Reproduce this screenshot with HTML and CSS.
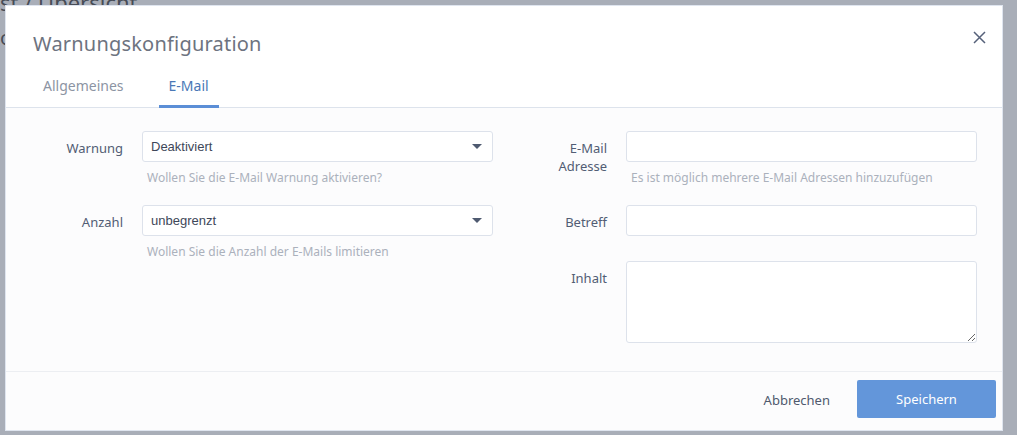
FILE: index.html
```html
<!DOCTYPE html>
<html lang="de">
<head>
    <meta charset="UTF-8">
    <meta name="viewport" content="width=device-width, initial-scale=1.0">
    <title>Warnungskonfiguration</title>
    <link rel="stylesheet" href="styles.css">
</head>
<body>
    <div class="page">
        <div class="crumb">st / Übersicht</div>
        <div class="page-row">o</div>
    </div>
    <div class="overlay"></div>

    <div class="modal">
        <div class="modal-header">
            <h2 class="modal-title">Warnungskonfiguration</h2>
            <button class="close" type="button" aria-label="Schließen">
                <svg width="13" height="13" viewBox="0 0 13 13">
                    <path d="M1 1 L12 12 M12 1 L1 12" stroke="#56617a" stroke-width="1.5" fill="none"/>
                </svg>
            </button>
            <div class="tabs">
                <span class="tab">Allgemeines</span>
                <span class="tab active">E-Mail</span>
            </div>
        </div>

        <div class="modal-body">
            <div class="col">
                <div class="row">
                    <label class="label">Warnung</label>
                    <div class="field">
                        <div class="select">
                            <span>Deaktiviert</span>
                            <span class="caret"></span>
                        </div>
                        <div class="hint">Wollen Sie die E-Mail Warnung aktivieren?</div>
                    </div>
                </div>
                <div class="row">
                    <label class="label">Anzahl</label>
                    <div class="field">
                        <div class="select">
                            <span>unbegrenzt</span>
                            <span class="caret"></span>
                        </div>
                        <div class="hint">Wollen Sie die Anzahl der E-Mails limitieren</div>
                    </div>
                </div>
            </div>

            <div class="col">
                <div class="row">
                    <label class="label">E-Mail<br>Adresse</label>
                    <div class="field">
                        <input class="input" type="text">
                        <div class="hint">Es ist möglich mehrere E-Mail Adressen hinzuzufügen</div>
                    </div>
                </div>
                <div class="row plain">
                    <label class="label">Betreff</label>
                    <div class="field">
                        <input class="input" type="text">
                    </div>
                </div>
                <div class="row">
                    <label class="label">Inhalt</label>
                    <div class="field">
                        <textarea class="textarea"></textarea>
                    </div>
                </div>
            </div>
        </div>

        <div class="modal-footer">
            <button class="btn-link" type="button">Abbrechen</button>
            <button class="btn-primary" type="button">Speichern</button>
        </div>
    </div>
</body>
</html>
```

FILE: styles.css
```css
body {
    font-family: 'Noto Sans', 'Open Sans', sans-serif;
    margin: 0;
    padding: 0;
    width: 1017px;
    height: 435px;
    overflow: hidden;
    background-color: #fff;
    position: relative;
}

.page {
    color: #333;
}

.crumb {
    font-size: 22px;
    line-height: 24px;
    margin-top: -10px;
}

.page-row {
    font-size: 20px;
    margin-top: 10px;
}

.overlay {
    position: absolute;
    inset: 0;
    background-color: rgba(90, 100, 118, 0.52);
}

.modal {
    position: absolute;
    left: 5px;
    top: 5px;
    width: 998px;
    height: 426px;
    background-color: #fcfcfd;
    border: 1px solid #dfe5ef;
    box-sizing: border-box;
    display: flex;
    flex-direction: column;
}

.modal-header {
    background-color: #fff;
    border-bottom: 1px solid #dde3ec;
    padding: 0 0 0 27px;
    position: relative;
}

.modal-title {
    margin: 0;
    padding-top: 24px;
    font-size: 20px;
    font-weight: 400;
    color: #6d7380;
    letter-spacing: 0.2px;
    line-height: 28px;
}

.close {
    position: absolute;
    right: 16px;
    top: 25px;
    background: none;
    border: none;
    padding: 0;
    cursor: pointer;
}

.tabs {
    display: flex;
    margin-top: 19px;
}

.tab {
    font-size: 14px;
    color: #8c94a3;
    padding: 0 10px 10px;
    line-height: 18px;
    border-bottom: 3px solid transparent;
    margin-bottom: -1px;
}

.tab + .tab {
    margin-left: 25px;
}

.tab.active {
    color: #4a78b6;
    border-bottom-color: #5b8ed6;
}

.modal-body {
    flex: 1;
    display: grid;
    grid-template-columns: 460px 460px;
    column-gap: 24px;
    padding: 23px 0 0 27px;
}

.row {
    display: grid;
    grid-template-columns: 90px 1fr;
    column-gap: 19px;
    margin-bottom: 19px;
}

.row.plain {
    margin-bottom: 25px;
}

.label {
    text-align: right;
    font-size: 13px;
    line-height: 18px;
    padding-top: 8px;
    color: #525d74;
}

.select, .input {
    display: block;
    height: 31px;
    box-sizing: border-box;
    border: 1px solid #dde2eb;
    border-radius: 3px;
    background-color: #fff;
    width: 100%;
    margin: 0;
}

.select {
    display: flex;
    align-items: center;
    justify-content: space-between;
    padding: 0 10px 0 8px;
    font-family: 'Liberation Sans', Arial, sans-serif;
    font-size: 13px;
    color: #3e4759;
}

.caret {
    width: 0;
    height: 0;
    border-left: 5px solid transparent;
    border-right: 5px solid transparent;
    border-top: 5px solid #4f5a70;
}

.hint {
    font-size: 12px;
    color: #abb1bc;
    padding: 7px 0 0 5px;
    line-height: 17px;
}

.textarea {
    display: block;
    width: 100%;
    height: 82px;
    box-sizing: border-box;
    border: 1px solid #dde2eb;
    border-radius: 3px;
    background-color: #fff;
    margin: 0;
}

.modal-footer {
    border-top: 1px solid #eceef2;
    display: flex;
    justify-content: flex-end;
    align-items: center;
    padding: 8px 6px 12px 0;
}

.btn-link {
    background: none;
    border: none;
    font-family: inherit;
    font-size: 13px;
    color: #4f596d;
    padding: 0;
    margin-right: 27px;
    margin-top: 2px;
}

.btn-primary {
    background-color: #6396da;
    color: #fff;
    border: none;
    border-radius: 2px;
    font-family: inherit;
    font-size: 13px;
    width: 139px;
    height: 38px;
}
```
